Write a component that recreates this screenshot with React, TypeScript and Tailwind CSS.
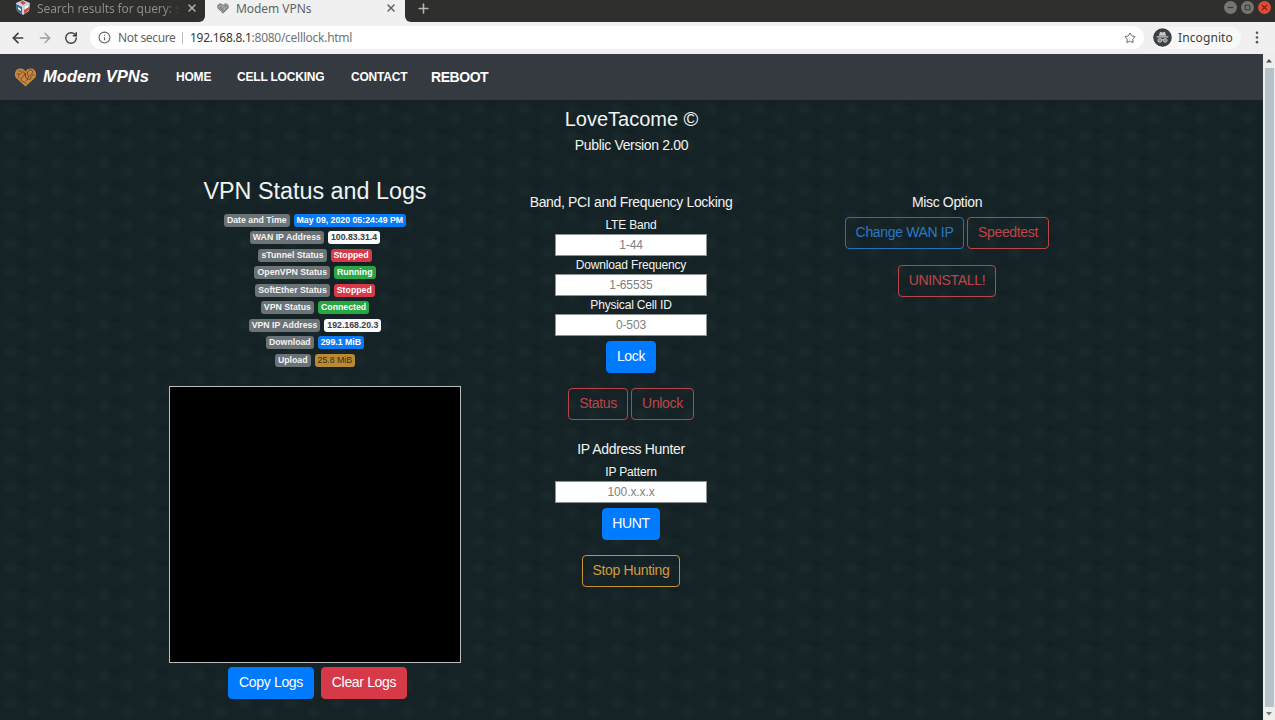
import React from "react";
import { ArrowLeft, ArrowRight, Info, Plus, RotateCw, Star, X } from "lucide-react";

interface StatusItem {
  label: string;
  value: string;
  color: string;
}

const statusItems: StatusItem[] = [
  { label: "Date and Time", value: "May 09, 2020 05:24:49 PM", color: "bg-[#0b7bf5] text-white font-bold" },
  { label: "WAN IP Address", value: "100.83.31.4", color: "bg-[#f8f9fa] text-[#3a3f44] font-bold" },
  { label: "sTunnel Status", value: "Stopped", color: "bg-[#d63a49] text-white font-bold" },
  { label: "OpenVPN Status", value: "Running", color: "bg-[#28a745] text-white font-bold" },
  { label: "SoftEther Status", value: "Stopped", color: "bg-[#d63a49] text-white font-bold" },
  { label: "VPN Status", value: "Connected", color: "bg-[#28a745] text-white font-bold" },
  { label: "VPN IP Address", value: "192.168.20.3", color: "bg-[#f8f9fa] text-[#3a3f44] font-bold" },
  { label: "Download", value: "299.1 MiB", color: "bg-[#0b7bf5] text-white font-bold" },
  { label: "Upload", value: "25.8 MiB", color: "bg-[#b98a35] text-[#3a2c14]" },
];

const variants = {
  primary: "bg-[#007bff] border-[#007bff] text-white",
  danger: "bg-[#d63a49] border-[#d63a49] text-white",
  outlinePrimary: "border-[#2570bd] text-[#2b78c6]",
  outlineDanger: "border-[#b84548] text-[#bd4549]",
  outlineWarning: "border-[#c49239] text-[#d09c42]",
};

interface ButtonProps {
  variant: keyof typeof variants;
  width: string;
  children: React.ReactNode;
}

const Button: React.FC<ButtonProps> = ({ variant, width, children }) => (
  <button
    className={`flex h-8 shrink-0 items-center justify-center rounded-[4px] border pb-px text-[14px] tracking-[-0.34px] whitespace-nowrap ${width} ${variants[variant]}`}
  >
    {children}
  </button>
);

const Field: React.FC<{ label: string; placeholder: string }> = ({ label, placeholder }) => (
  <label className="flex flex-col items-center">
    <span className="h-[18px] text-[12px] leading-[18px] tracking-[-0.17px]">{label}</span>
    <input
      placeholder={placeholder}
      className="h-[22px] w-[152px] border border-[#8a9293] bg-white pb-px text-center text-[12px] tracking-[-0.1px] placeholder:text-[#808080]"
    />
  </label>
);

const Heart: React.FC<{ className: string; fill: string; line: string }> = ({ className, fill, line }) => (
  <svg viewBox="0 0 22 19" className={className}>
    <path d="M11 18.5 1.7 10C-.8 7 .4 2 4 .8 7-.2 9.7 1 11 3.7 12.3 1 15-.2 18 .8c3.6 1.2 4.8 6.2 2.3 9.2z" fill={fill} />
    <path
      d="M4 3c3-1 4 2 2 3S3 8 5 10M8 3c3 2 2 5 0 6s-2 4 1 5M11 5v4c0 2 3 2 3 0s-2-3-1-5 4-3 5-1-1 3-2 4 2 3 0 4-4-1-4 2M2 6h3M17 7h3M9 13l3 3"
      fill="none"
      stroke={line}
      strokeWidth="1"
    />
  </svg>
);

const BoxLogo: React.FC = () => (
  <svg viewBox="0 0 14 15" className="h-[15px] w-[14px]">
    <path d="M7 0 14 3 13 11 7 15 1 11 0 3z" fill="#c9d3dc" />
    <path d="M0 4 6 7v7l-5-3z" fill="#356898" />
    <path d="M4 2 7 1l3 2-3 2zM8 10l5-3v3l-5 4z" fill="#cf4b3e" />
    <path d="m2 7 3 2v2L2 9zM9 7l3-2v2L9 9z" fill="#fff" />
  </svg>
);

const Incognito: React.FC = () => (
  <svg viewBox="0 0 20 20" className="h-[19px] w-[19px]">
    <circle cx="10" cy="10" r="9.8" fill="#3c4043" />
    <path d="M6.2 8.2 7.4 4l2.6.7 2.6-.7 1.2 4.2zM3.8 8.8h12.4v1.1H3.8z" fill="#c6c8ca" />
    <g fill="#85888b" stroke="#c6c8ca" strokeWidth="1">
      <circle cx="7.2" cy="13" r="2" />
      <circle cx="12.8" cy="13" r="2" />
      <path d="M9 12.6q1-.7 2 0" fill="none" />
    </g>
  </svg>
);

const BrowserBar: React.FC = () => (
  <header className="font-['Noto_Sans',sans-serif] text-[#5f6368]">
    <div className="flex h-[22px] bg-[#f0f0f0]">
      <div className="flex w-[205px] items-start rounded-br-[6px] bg-[#2f2f2e] pl-[16px]">
        <BoxLogo />
        <span className="ml-[7px] h-[17px] w-[143px] overflow-hidden bg-linear-to-r from-[#8e8e8d] from-90% to-[#2f2f2e] bg-clip-text text-[12px] leading-[17px] tracking-[-0.1px] whitespace-nowrap text-transparent">
          Search results for query: s
        </span>
        <X className="mt-[2px] ml-[6px] h-3 w-3 text-[#b5b5b4]" strokeWidth={3} />
      </div>
      <div className="flex w-[200px] items-start pl-[12px]">
        <Heart className="mt-[3px] h-[11px] w-[12px]" fill="#777" line="#ddd" />
        <span className="ml-[7px] w-[143px] text-[12px] leading-[17px] tracking-[-0.05px]">Modem VPNs</span>
        <X className="mt-[2px] ml-[6px] h-3 w-3" strokeWidth={3} />
      </div>
      <div className="flex flex-1 items-start rounded-bl-[6px] bg-[#2f2f2e] pl-[11px]">
        <Plus className="mt-[1px] h-[15px] w-[15px] text-[#b5b5b4]" strokeWidth={2.5} />
      </div>
      <div className="flex items-start gap-[4px] bg-[#2f2f2e] pt-[1px] pr-[4px]">
        <span className="flex h-[13px] w-[13px] items-center justify-center rounded-full bg-[#767670]">
          <svg viewBox="0 0 10 10" className="h-[9px]"><path d="M2 5h6" stroke="#393936" strokeWidth="1.4" /></svg>
        </span>
        <span className="flex h-[13px] w-[13px] items-center justify-center rounded-full bg-[#767670]">
          <svg viewBox="0 0 10 10" className="h-[9px]"><path d="M2.5 2.5h5v5h-5z" fill="none" stroke="#393936" strokeWidth="1.2" /></svg>
        </span>
        <span className="flex h-[13px] w-[13px] items-center justify-center rounded-full bg-[#e14b34]">
          <X className="h-[9px] w-[9px] text-[#6c251c]" strokeWidth={3} />
        </span>
      </div>
    </div>
    <div className="flex h-8 items-center bg-[#f0f0f0] pb-px pl-[10px]">
      <ArrowLeft className="h-[16px] w-[16px] text-[#3c4043]" strokeWidth={2.5} />
      <ArrowRight className="ml-[11px] h-[16px] w-[16px] text-[#9b9da0]" />
      <RotateCw className="ml-[11px] h-[14px] w-[14px] text-[#3c4043]" strokeWidth={2.5} />
      <div className="ml-[12px] flex h-[23px] w-[1054px] items-center rounded-full bg-white pr-[8px] pl-[8px] text-[12px]">
        <Info className="h-[13px] w-[13px]" />
        <span className="ml-[7px] w-[64px] tracking-[-0.35px] whitespace-nowrap">Not secure</span>
        <span className="h-3 w-px bg-[#bbbdc0]" />
        <span className="ml-[7px] tracking-[-0.27px] text-[#6f7276]">
          <span className="text-[#36393d]">192.168.8.1</span>:8080/celllock.html
        </span>
        <Star className="ml-auto h-[12px] w-[12px]" />
      </div>
      <div className="ml-[9px] flex h-[22px] w-[88px] items-center gap-[6px] rounded-full bg-[#f8f8f8]">
        <Incognito />
        <span className="text-[12px] tracking-[0.1px] text-[#3c4043]">Incognito</span>
      </div>
      <svg viewBox="0 0 4 14" className="ml-[14px] h-[13px] w-[4px]" fill="#55585c">
        <circle cx="2" cy="2" r="1.4" />
        <circle cx="2" cy="7" r="1.4" />
        <circle cx="2" cy="12" r="1.4" />
      </svg>
    </div>
  </header>
);

const Navbar: React.FC = () => (
  <nav className="flex h-[46px] items-center bg-[#343a40] pl-[14px] font-bold text-white">
    <Heart className="h-[19px] w-[23px]" fill="#c78b3f" line="#803c2a" />
    <span className="ml-[6px] w-[133px] text-[16.6px] whitespace-nowrap italic">Modem VPNs</span>
    <a className="w-[61px] text-[12px] tracking-[-0.2px]">HOME</a>
    <a className="w-[114px] text-[12px] tracking-[-0.2px]">CELL LOCKING</a>
    <a className="w-[80px] text-[12px] tracking-[-0.2px]">CONTACT</a>
    <a className="text-[14px] tracking-[-0.45px]">REBOOT</a>
  </nav>
);

const StatusColumn: React.FC = () => (
  <section className="flex w-[316px] flex-col items-center">
    <h2 className="h-[37px] text-[23.33px] leading-[28px]">VPN Status and Logs</h2>
    {statusItems.map((item) => (
      <div key={item.label} className="flex h-[17.45px] shrink-0 gap-[4px] text-[8.75px] leading-[13px]">
        <span className="h-[13px] rounded-[3px] bg-[#6c7376] px-[3px] font-bold whitespace-nowrap">{item.label}</span>
        <span className={`h-[13px] rounded-[3px] px-[3px] whitespace-nowrap ${item.color}`}>{item.value}</span>
      </div>
    ))}
    <div className="mt-[15px] h-[277px] w-[292px] shrink-0 border border-[#b9bdbd] bg-black" />
    <div className="mt-[4px] flex gap-[7px] pl-[5px]">
      <Button variant="primary" width="w-[86px]">Copy Logs</Button>
      <Button variant="danger" width="w-[86px]">Clear Logs</Button>
    </div>
  </section>
);

const LockingColumn: React.FC = () => (
  <section className="flex w-[316px] flex-col items-center pt-[17px]">
    <h3 className="h-[22px] text-[14px] leading-[17px] tracking-[-0.34px]">Band, PCI and Frequency Locking</h3>
    <Field label="LTE Band" placeholder="1-44" />
    <Field label="Download Frequency" placeholder="1-65535" />
    <Field label="Physical Cell ID" placeholder="0-503" />
    <div className="mt-[5px]">
      <Button variant="primary" width="w-[50px]">Lock</Button>
    </div>
    <div className="mt-[15px] flex gap-[3px]">
      <Button variant="outlineDanger" width="w-[60px]">Status</Button>
      <Button variant="outlineDanger" width="w-[63px]">Unlock</Button>
    </div>
    <h3 className="mt-[21px] h-[22px] text-[14px] leading-[17px] tracking-[-0.34px]">IP Address Hunter</h3>
    <Field label="IP Pattern" placeholder="100.x.x.x" />
    <div className="mt-[5px]">
      <Button variant="primary" width="w-[58px]">HUNT</Button>
    </div>
    <div className="mt-[15px]">
      <Button variant="outlineWarning" width="w-[98px]">Stop Hunting</Button>
    </div>
  </section>
);

const MiscColumn: React.FC = () => (
  <section className="flex w-[316px] flex-col items-center pt-[17px]">
    <h3 className="h-[23px] text-[14px] leading-[17px] tracking-[-0.34px]">Misc Option</h3>
    <div className="flex gap-[3px]">
      <Button variant="outlinePrimary" width="w-[119px]">Change WAN IP</Button>
      <Button variant="outlineDanger" width="w-[82px]">Speedtest</Button>
    </div>
    <div className="mt-[16px]">
      <Button variant="outlineDanger" width="w-[98px]">UNINSTALL!</Button>
    </div>
  </section>
);

const Scrollbar: React.FC = () => (
  <div className="flex w-[12px] flex-col items-center bg-[#eeeeed]">
    <svg viewBox="0 0 12 14" className="h-[14px] w-[12px]"><path d="M3 8.5h6L6 5z" fill="#4d4d4d" /></svg>
    <div className="w-[9px] flex-1 bg-[#b5c2ca]" />
    <svg viewBox="0 0 12 13" className="h-[13px] w-[12px]"><path d="M3 5h6L6 8.5z" fill="#777" /></svg>
  </div>
);

export default function App() {
  return (
    <div className="flex h-[720px] w-[1275px] flex-col overflow-hidden">
      <BrowserBar />
      <div className="flex min-h-0 flex-1 font-['Liberation_Sans',Arial,sans-serif]">
        <div className="flex w-[1263px] flex-col">
          <Navbar />
          <main className="flex-1 bg-[#162326] bg-[radial-gradient(ellipse_9px_8px_at_11px_9px,#1a2a2b,transparent),radial-gradient(ellipse_9px_8px_at_34px_18px,#1a2a2b,transparent),radial-gradient(ellipse_8px_4px_at_23px_4px,#121e22,transparent)] bg-[length:46.7px_27px] text-[#f1f3f3]">
            <div className="flex h-[77px] flex-col items-center pt-[6px]">
              <h1 className="h-[31px] text-[20px] leading-[26px]">LoveTacome ©</h1>
              <p className="text-[14px] leading-[17px] tracking-[-0.34px]">Public Version 2.00</p>
            </div>
            <div className="flex pl-[157px]">
              <StatusColumn />
              <LockingColumn />
              <MiscColumn />
            </div>
          </main>
        </div>
        <Scrollbar />
      </div>
    </div>
  );
}
